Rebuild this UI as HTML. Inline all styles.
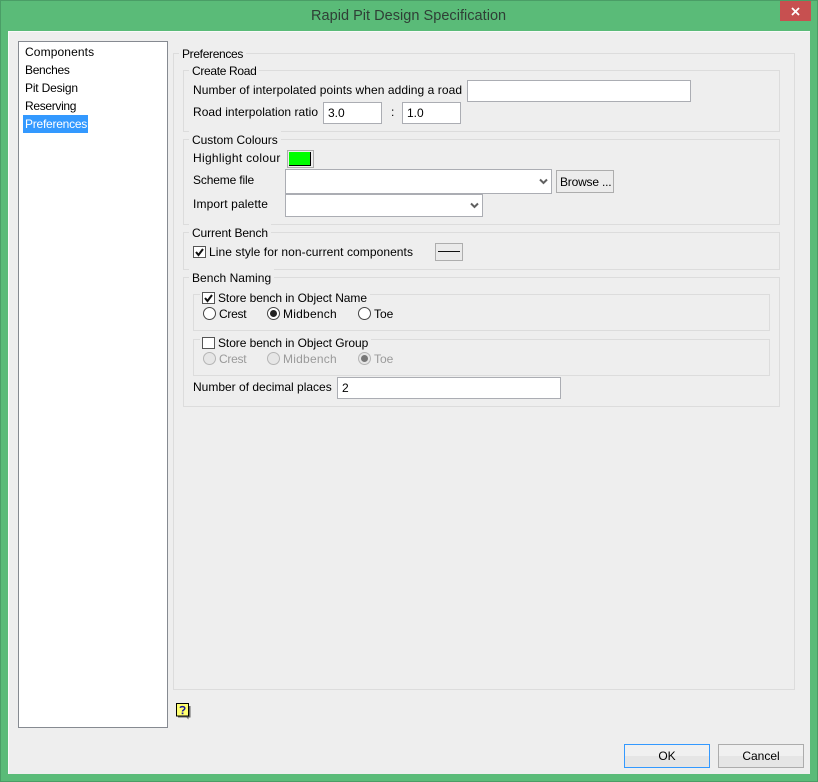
<!DOCTYPE html>
<html><head><meta charset="utf-8"><style>
html,body{margin:0;padding:0;width:818px;height:782px;overflow:hidden;background:#5abb78}
body{position:relative;font:12px/18px "Liberation Sans",sans-serif;color:#000}
div,span,svg{position:absolute;box-sizing:border-box}
.t{white-space:nowrap;height:18px}
.g{border:1px solid #dcdcdc}
.l{white-space:nowrap;height:18px;background:#eee;padding:0 3px 0 3px}
.i{background:#fff;border:1px solid #abadb3;white-space:nowrap;padding-left:4px;line-height:21px}
.d{color:#9a9a9a}
</style></head><body>
<div style="left:0;top:0;width:818px;height:782px;border:1px solid #4a9d66"></div>
<div class="t" style="left:311px;top:7px;font-size:14.5px;color:#2f3f36;height:18px;letter-spacing:.03px">Rapid Pit Design Specification</div>
<div style="left:780px;top:1px;width:31px;height:20px;background:#c75050"></div>
<svg style="left:780px;top:1px" width="31" height="20"><path d="M12 7l7 7M19 7l-7 7" stroke="#fff" stroke-width="1.8" fill="none"/></svg>
<div style="left:8px;top:31px;width:802px;height:743px;background:#eee;border-left:1px solid #fafafa;border-top:1px solid #fafafa"></div>

<div style="left:18px;top:41px;width:150px;height:687px;background:#fff;border:1px solid #868a91"></div>
<div class="t" style="left:25px;top:43px;letter-spacing:.12px">Components</div>
<div class="t" style="left:25px;top:61px;letter-spacing:-.31px">Benches</div>
<div class="t" style="left:25px;top:79px;letter-spacing:-.18px">Pit Design</div>
<div class="t" style="left:25px;top:97px;letter-spacing:-.32px">Reserving</div>
<div style="left:23px;top:115px;width:65px;height:18px;background:#3399ff"></div>
<div class="t" style="left:25px;top:115px;color:#fff;letter-spacing:-.24px">Preferences</div>

<div class="g" style="left:173px;top:53px;width:622px;height:637px"></div>
<div class="l" style="left:179px;top:45px;letter-spacing:-.33px">Preferences</div>

<div class="g" style="left:183px;top:70px;width:597px;height:62px"></div>
<div class="l" style="left:189px;top:62px;letter-spacing:-.33px">Create Road</div>
<div class="t" style="left:193px;top:81px;letter-spacing:.06px">Number of interpolated points when adding a road</div>
<div class="i" style="left:467px;top:80px;width:224px;height:22px"></div>
<div class="t" style="left:193px;top:103px;letter-spacing:.04px">Road interpolation ratio</div>
<div class="i" style="left:323px;top:102px;width:59px;height:22px">3.0</div>
<div class="t" style="left:391px;top:103px">:</div>
<div class="i" style="left:402px;top:102px;width:59px;height:22px">1.0</div>

<div class="g" style="left:183px;top:139px;width:597px;height:86px"></div>
<div class="l" style="left:189px;top:131px;letter-spacing:-.02px">Custom Colours</div>
<div class="t" style="left:193px;top:149px;letter-spacing:.31px">Highlight colour</div>
<div style="left:287px;top:150px;width:27px;height:18px;border:1px solid #adadad;background:#eee"></div>
<div style="left:289px;top:152px;width:22px;height:14px;background:#00ff00;border-right:1px solid #000;border-bottom:1px solid #000"></div>
<div class="t" style="left:193px;top:171px;letter-spacing:-.15px">Scheme file</div>
<div class="i" style="left:285px;top:169px;width:267px;height:25px"></div>
<svg style="left:539px;top:178px" width="9" height="8"><path d="M1 1.5l3.5 3.5 3.5-3.5" stroke="#606060" stroke-width="2" fill="none"/></svg>
<div style="left:556px;top:170px;width:58px;height:23px;border:1px solid #adadad;background:#ececec"></div>
<div class="t" style="left:560px;top:173px;letter-spacing:-.2px">Browse ...</div>
<div class="t" style="left:193px;top:195px;letter-spacing:.12px">Import palette</div>
<div class="i" style="left:285px;top:194px;width:198px;height:23px"></div>
<svg style="left:470px;top:202px" width="9" height="8"><path d="M1 1.5l3.5 3.5 3.5-3.5" stroke="#606060" stroke-width="2" fill="none"/></svg>

<div class="g" style="left:183px;top:232px;width:597px;height:38px"></div>
<div class="l" style="left:189px;top:224px;letter-spacing:-.11px">Current Bench</div>
<div style="left:193px;top:246px;width:13px;height:12px;background:#fff;border:1px solid #555"></div>
<svg style="left:193px;top:246px" width="13" height="13"><path d="M3 6l2.5 3L10 3" stroke="#111" stroke-width="2" fill="none"/></svg>
<div class="t" style="left:209px;top:243px;letter-spacing:.07px">Line style for non-current components</div>
<div style="left:435px;top:243px;width:28px;height:18px;border:1px solid #adadad;background:#eaeaea"></div>
<div style="left:438px;top:251px;width:22px;height:1px;background:#111"></div>

<div class="g" style="left:183px;top:277px;width:597px;height:130px"></div>
<div class="l" style="left:189px;top:269px;letter-spacing:.04px">Bench Naming</div>

<div class="g" style="left:193px;top:294px;width:577px;height:37px"></div>
<div class="l" style="left:200px;top:289px;width:170px"></div>
<div style="left:202px;top:292px;width:13px;height:12px;background:#fff;border:1px solid #555"></div>
<svg style="left:202px;top:292px" width="13" height="13"><path d="M3 6l2.5 3L10 3" stroke="#111" stroke-width="2" fill="none"/></svg>
<div class="t" style="left:218px;top:289px;letter-spacing:-.07px">Store bench in Object Name</div>
<svg style="left:200px;top:304px" width="200" height="20">
<g fill="#fff" stroke="#444"><circle cx="9.5" cy="9.5" r="6"/><circle cx="73.5" cy="9.5" r="6"/><circle cx="164.5" cy="9.5" r="6"/></g><circle cx="73.5" cy="9.5" r="3.5" fill="#222"/></svg>
<div class="t" style="left:219px;top:305px;letter-spacing:-.28px">Crest</div>
<div class="t" style="left:283px;top:305px;letter-spacing:.24px">Midbench</div>
<div class="t" style="left:374px;top:305px">Toe</div>

<div class="g" style="left:193px;top:339px;width:577px;height:37px"></div>
<div class="l" style="left:200px;top:334px;width:171px"></div>
<div style="left:202px;top:337px;width:13px;height:12px;background:#fff;border:1px solid #555"></div>
<div class="t" style="left:218px;top:334px;letter-spacing:-.07px">Store bench in Object Group</div>
<svg style="left:200px;top:349px" width="200" height="20">
<g fill="#e6e6e6" stroke="#b5b5b5"><circle cx="9.5" cy="9.5" r="6"/><circle cx="73.5" cy="9.5" r="6"/><circle cx="164.5" cy="9.5" r="6"/></g><circle cx="164.5" cy="9.5" r="3.5" fill="#777"/></svg>
<div class="t d" style="left:219px;top:350px;letter-spacing:-.28px">Crest</div>
<div class="t d" style="left:283px;top:350px;letter-spacing:.24px">Midbench</div>
<div class="t d" style="left:374px;top:350px">Toe</div>

<div class="t" style="left:193px;top:378px">Number of decimal places</div>
<div class="i" style="left:337px;top:377px;width:224px;height:22px">2</div>

<svg style="left:175px;top:702px" width="16" height="18">
<path d="M3 4h12.500v11.500h-2v2l-2-2H3z" fill="#666"/>
<rect x="1.500" y="1.500" width="12" height="12.500" fill="#ffff70" stroke="#000"/>
<path d="M5.200 5.800c.3-1.600 4.600-1.800 4.600.6 0 1.600-2.300 1.600-2.300 3.100" stroke="#1a1a9a" stroke-width="1.500" fill="none"/>
<rect x="6.700" y="10.500" width="1.700" height="1.700" fill="#1a1a9a"/></svg>

<div style="left:624px;top:744px;width:86px;height:24px;border:1px solid #3399ff;background:linear-gradient(#f0f0f0 50%,#e5e5e5 50%)"></div>
<div class="t" style="left:624px;top:747px;width:86px;text-align:center">OK</div>
<div style="left:718px;top:744px;width:86px;height:24px;border:1px solid #acacac;background:linear-gradient(#f0f0f0 50%,#e5e5e5 50%)"></div>
<div class="t" style="left:718px;top:747px;width:86px;text-align:center">Cancel</div>
</body></html>
